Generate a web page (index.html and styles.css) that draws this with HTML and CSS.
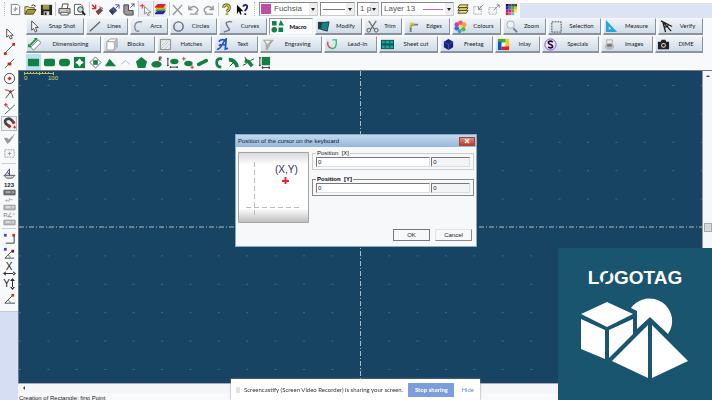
FILE: index.html
```
<!DOCTYPE html>
<html lang="en">
<head>
    <meta charset="UTF-8">
    <meta name="viewport" content="width=device-width, initial-scale=1.0">
    <title>Logotag</title>
    <link rel="stylesheet" href="styles.css">
</head>
<body>
    <header class="toolbar">
        <div class="tools">
            <span class="grip"></span>
            <button class="tool" aria-label="New"><svg viewBox="0 0 14 14"><path d="M2.500 1.500h7l2 2v9h-9z" fill="#fff" stroke="#777"/><path d="M7 4v5M4.500 6.500h5M5 9l4-4" stroke="#999"/></svg></button>
            <button class="tool" aria-label="Open"><svg viewBox="0 0 14 14"><path d="M1 12V4h4l1 1h5v2" fill="#e6df77" stroke="#554"/><path d="M1 12l3-5h9l-3 5z" fill="#a89a28" stroke="#443"/><path d="M8 3q2-2 4 0v1" fill="none" stroke="#222"/></svg></button>
            <button class="tool" aria-label="Save"><svg viewBox="0 0 14 14"><path d="M1 2h12v11H1z" fill="#26281c"/><path d="M3 2h7v5H3z" fill="#9a9c4a"/><path d="M4 9h6v4H4z" fill="#ddd"/><path d="M5 10h2v3H5z" fill="#222"/></svg></button>
            <span class="divider"></span>
            <button class="tool" aria-label="Print"><svg viewBox="0 0 14 14"><path d="M4 6l1-5h6l-1 5" fill="#fff" stroke="#444"/><path d="M1 6h12v5H1z" fill="#ccc" stroke="#444"/><path d="M3 10h8v3H3z" fill="#eee" stroke="#555"/><path d="M9 8h2" stroke="#a90"/></svg></button>
            <button class="tool" aria-label="Preview"><svg viewBox="0 0 14 14"><path d="M1.500 1.500h7l2 2v9h-9z" fill="#fff" stroke="#555"/><circle cx="8" cy="7" r="3" fill="#bfe0e6" stroke="#333"/><path d="M10 9l3 4" stroke="#222" stroke-width="2"/></svg></button>
            <span class="divider"></span>
            <button class="tool" aria-label="Import"><svg viewBox="0 0 14 14"><path d="M1 2l4 4M5 2v4H1" stroke="#d22" fill="none" stroke-width="1.500"/><path d="M5 9l5-4 3 3-5 5z" fill="#555"/><path d="M5 9l3 4 1-3z" fill="#c22"/><path d="M9 4l4 2" stroke="#c22"/></svg></button>
            <button class="tool" aria-label="Export"><svg viewBox="0 0 14 14"><path d="M9 6l4-4M9 2h4v4" stroke="#44b" fill="none"/><path d="M2 8l5-4 4 4-5 5z" fill="#456"/><path d="M2 8l4 5 1-4z" fill="#238"/></svg></button>
            <button class="tool" aria-label="Part"><svg viewBox="0 0 14 14"><path d="M2 2h5v6h5v5H4l-2-2z" fill="#999" stroke="#444"/><path d="M9 5l4-4M10 1h3v3" stroke="#44b" fill="none"/></svg></button>
            <button class="tool tool-pressed" aria-label="Pick"><svg viewBox="0 0 14 14"><path d="M1 3h5M3.500 1v5" stroke="#c22"/><path d="M6 4v8l2-2 2 4 1-1-1-3h3z" fill="#fff" stroke="#888"/></svg></button>
            <button class="tool tool-pressed" aria-label="Layers"><svg viewBox="0 0 14 14"><path d="M1 11l3-3h9l-3 4H1z" fill="#22a"/><path d="M1 9l3-3h9l-3 3z" fill="#2a4"/><path d="M1 7l3-3h9l-3 3z" fill="#ea2"/><path d="M1 4l3-3h9l-3 4H1z" fill="#d22"/></svg></button>
            <span class="divider"></span>
            <button class="tool" aria-label="Delete"><svg viewBox="0 0 14 14"><path d="M2 2l10 11M12 2L2 13" stroke="#999" stroke-width="1.500"/></svg></button>
            <button class="tool" aria-label="Undo"><svg viewBox="0 0 14 14"><path d="M2 3v4h4M2 7q4-5 8-2t-1 6M3 12h9" fill="none" stroke="#999" stroke-width="1.500"/></svg></button>
            <button class="tool" aria-label="Redo"><svg viewBox="0 0 14 14"><path d="M12 3v4H8M12 7Q8 2 4 5t1 6M3 12h9" fill="none" stroke="#999" stroke-width="1.500"/></svg></button>
            <span class="divider"></span>
            <button class="tool" aria-label="Help"><svg viewBox="0 0 14 14"><path d="M4 5q0-3 3-3t3 3-3 4" fill="none" stroke="#332" stroke-width="3"/><path d="M4 5q0-3 3-3t3 3-3 4" fill="none" stroke="#e8da28" stroke-width="1.500"/><path d="M6 11h3v2H6z" fill="#b8a818"/></svg></button>
            <button class="tool" aria-label="Context help"><svg viewBox="0 0 14 14"><path d="M1 2v10l2-3 2 4 1-1-1-3h3z" fill="#111"/><path d="M8 4q0-2 2-2t2 2-2 4v1" fill="none" stroke="#226" stroke-width="2"/><path d="M9 11h2v2H9z" fill="#226"/></svg></button>
        </div>
        <span class="grip"></span>
        <div class="combo combo-colour"><select aria-label="Colour"><option>Fuchsia</option></select></div>
        <div class="combo combo-line"><select aria-label="Line type"><option></option></select></div>
        <div class="combo combo-width"><select aria-label="Line width"><option>1 p</option></select></div>
        <div class="combo combo-layer"><select aria-label="Layer"><option>Layer 13</option></select></div>
        <div class="tools tools-end">
            <button class="tool" aria-label="Layer list"><svg viewBox="0 0 14 14"><path d="M2 11l2-3h9l-2 3zM2 8l2-3h9l-2 3zM2 5l2-3h9l-2 3z" fill="#f4e96a" stroke="#443"/></svg></button>
            <button class="tool" aria-label="Shrink"><svg viewBox="0 0 14 14"><path d="M2 4h8v8H2z" fill="none" stroke="#aaa" stroke-dasharray="2 1"/><path d="M12 2L7 7M7 4v3h3" stroke="#888" fill="none"/></svg></button>
            <button class="tool" aria-label="Extend"><svg viewBox="0 0 14 14"><path d="M1 5h8v7H1z" fill="none" stroke="#aaa" stroke-dasharray="2 1"/><path d="M6 8l6-6M9 2h3v3" stroke="#888" fill="none"/></svg></button>
            <button class="tool" aria-label="Palette"><svg viewBox="0 0 14 14"><path d="M2 1h3v3H2z" fill="#211"/><path d="M5 1h3v3H5z" fill="#43a"/><path d="M8 1h3v3H8z" fill="#262"/><path d="M11 1h3v3h-3z" fill="#832"/><path d="M2 4h3v3H2z" fill="#229"/><path d="M5 4h3v3H5z" fill="#28b"/><path d="M8 4h3v3H8z" fill="#2b4"/><path d="M11 4h3v3h-3z" fill="#bc2"/><path d="M2 7h3v3H2z" fill="#92a"/><path d="M5 7h3v3H5z" fill="#d28"/><path d="M8 7h3v3H8z" fill="#e62"/><path d="M11 7h3v3h-3z" fill="#ee3"/><path d="M2 10h3v3H2z" fill="#d22"/><path d="M5 10h3v3H5z" fill="#f4b"/><path d="M8 10h3v3H8z" fill="#3dd"/></svg></button>
        </div>
        <div class="toolbar-rest"></div>
    </header>

    <div class="workspace">
        <aside class="sidebar">
            <div class="side-tools">
                <button class="side" aria-label="Pointer"><svg viewBox="0 0 14 14"><path d="M4 2v9l2-2 2 4 2-1-2-3h3z" fill="#fff" stroke="#444"/></svg></button>
                <button class="side" aria-label="End point"><svg viewBox="0 0 14 14"><path d="M2 12L12 2" stroke="#555"/><path d="M1 11h3v3H1zM10 1h3v3h-3z" fill="#c22"/></svg></button>
                <button class="side" aria-label="Mid point"><svg viewBox="0 0 14 14"><path d="M2 12L12 2" stroke="#555"/><path d="M5 6h4v3H5z" fill="#c22"/></svg></button>
                <button class="side" aria-label="Centre"><svg viewBox="0 0 14 14"><circle cx="7" cy="7" r="5.500" fill="none" stroke="#444"/><path d="M5 7h4M7 5v4" stroke="#c22" stroke-width="1.500"/></svg></button>
                <button class="side" aria-label="Intersection"><svg viewBox="0 0 14 14"><path d="M2 3q7 0 9 9M12 3Q7 5 3 12" fill="none" stroke="#444"/><circle cx="8" cy="5" r="1.500" fill="#c22"/></svg></button>
                <button class="side" aria-label="Tangent"><svg viewBox="0 0 14 14"><path d="M2 13L13 3M4 4l3 4" stroke="#555"/><path d="M1 3h4M3 1v4" stroke="#c22"/></svg></button>
                <button class="side side-pressed" aria-label="Magnet"><svg viewBox="0 0 14 14"><path d="M8 11L3 7q-2-4 2-5 3-1 7 5" fill="none" stroke="#444" stroke-width="3"/><path d="M8 11L6 9M12 7l-1-2" stroke="#c22" stroke-width="3"/><path d="M11 11h3M12.500 9.500v3" stroke="#c22"/></svg></button>
                <button class="side" aria-label="Validate"><svg viewBox="0 0 14 14"><path d="M1 7l3-1 2 2 7-6-5 8-3 3z" fill="#999"/></svg></button>
                <button class="side" aria-label="Grid"><svg viewBox="0 0 14 14"><path d="M2 3h10v8H2z" fill="none" stroke="#999" stroke-dasharray="2 1"/><path d="M5 7h4M7 5v4" stroke="#999"/></svg></button>
                <hr class="side-rule">
                <button class="side" aria-label="Angle"><svg viewBox="0 0 14 14"><path d="M1 9h12l-3 3H4zM7 9V2L2 9" fill="#ddd" stroke="#555"/><path d="M5 6l3 3" stroke="#33c"/></svg></button>
                <button class="side side-keys" aria-label="Absolute coordinates">123<svg viewBox="0 0 14 7"><path d="M1 1h12v5H1z" fill="#777" stroke="#555"/><path d="M3 3h5M10 3h2" stroke="#ddd"/></svg></button>
                <button class="side side-keys side-off" aria-label="Relative coordinates">+/−<svg viewBox="0 0 14 7"><path d="M1 1h12v5H1z" fill="#bbb" stroke="#999"/><path d="M3 3h5M10 3h2" stroke="#fff"/></svg></button>
                <button class="side side-keys side-off" aria-label="Polar coordinates">R∠°<svg viewBox="0 0 14 7"><path d="M1 1h12v5H1z" fill="#bbb" stroke="#999"/><path d="M3 3h5M10 3h2" stroke="#fff"/></svg></button>
                <hr class="side-rule">
                <button class="side" aria-label="Right angle"><svg viewBox="0 0 14 14"><path d="M3 12h9V4" fill="none" stroke="#333"/><path d="M1 2h3v3H1z" fill="#44c"/><path d="M10 2h3v3h-3z" fill="#c33"/></svg></button>
                <button class="side" aria-label="Free angle"><svg viewBox="0 0 14 14"><path d="M12 12H2l8-8" fill="none" stroke="#444"/><path d="M5 9q3 0 3 3" fill="none" stroke="#4a6"/><path d="M1 1h3v3H1z" fill="#44c"/><path d="M9 3h3v3H9z" fill="#722"/></svg></button>
                <button class="side side-axis" aria-label="Lock X">X<svg viewBox="0 0 14 5"><path d="M0 2.500l3-2.500v5zM14 2.500L11 0v5zM2 2h10v1H2z" fill="#333"/></svg></button>
                <button class="side side-axis side-axis-y" aria-label="Lock Y">Y<svg viewBox="0 0 5 12"><path d="M2.500 0L5 3H0zM2.500 12L5 9H0zM2 2h1v8H2z" fill="#333"/></svg></button>
                <button class="side" aria-label="Lock angle"><svg viewBox="0 0 14 14"><path d="M13 12H2l8-8" fill="none" stroke="#444"/><path d="M5 9q3 0 3 3" fill="none" stroke="#4a6"/><path d="M9 2h3v3H9z" fill="#c33"/></svg></button>
            </div>
        </aside>

        <main class="main">
            <nav class="tabs tabs-first">
                <button class="tab"><svg viewBox="0 0 14 14"><path d="M4 1v10l2-2 2 4 1.500-1L8 8h3z" fill="#fff" stroke="#444"/></svg><span>Snap Shot</span></button>
                <button class="tab"><svg viewBox="0 0 14 14"><path d="M2 12L13 2" stroke="#666" stroke-width="1.500"/></svg><span>Lines</span></button>
                <button class="tab"><svg viewBox="0 0 14 14"><path d="M11 2Q3 1 3 7t5 5" fill="none" stroke="#889" stroke-width="1.500"/></svg><span>Arcs</span></button>
                <button class="tab"><svg viewBox="0 0 14 14"><circle cx="7" cy="7" r="5" fill="none" stroke="#667" stroke-width="1.500"/></svg><span>Circles</span></button>
                <button class="tab"><svg viewBox="0 0 14 14"><path d="M12 2Q4 1 6 5t3 5-6 3" fill="none" stroke="#778" stroke-width="1.500"/></svg><span>Curves</span></button>
                <button class="tab tab-active"><svg viewBox="0 0 14 14"><path d="M1 1h5v5H1zM10.500 0l3.500 6H8zM8 8h5v5H8z" fill="#138043"/><circle cx="3.500" cy="10.500" r="3" fill="#138043"/></svg><span>Macro</span></button>
                <button class="tab"><svg viewBox="0 0 14 14"><path d="M1 2h6v8H1z" fill="#243c48"/><path d="M5 3l8-1-2 10-7-2z" fill="#138587" stroke="#243c48"/></svg><span>Modify</span></button>
                <button class="tab"><svg viewBox="0 0 14 14"><path d="M3 1l6 9M11 1L5 10" stroke="#777" stroke-width="1.500"/><circle cx="3" cy="11" r="2" fill="none" stroke="#555"/><circle cx="11" cy="11" r="2" fill="none" stroke="#555"/></svg><span>Trim</span></button>
                <button class="tab"><svg viewBox="0 0 14 14"><path d="M5 13V7l2-2h6" fill="none" stroke="#777" stroke-width="2"/><path d="M5 8V4h4" fill="none" stroke="#cc3" stroke-width="2"/></svg><span>Edges</span></button>
                <button class="tab"><svg viewBox="0 0 14 14"><circle cx="7" cy="3" r="2.500" fill="#f55"/><circle cx="11" cy="5" r="2.500" fill="#f94"/><circle cx="10" cy="10" r="2.500" fill="#5b4"/><circle cx="6" cy="12" r="2" fill="#2ab"/><circle cx="3" cy="9" r="2.500" fill="#46d"/><circle cx="3" cy="5" r="2.500" fill="#b4a"/><circle cx="7" cy="7" r="2" fill="#fd5"/></svg><span>Colours</span></button>
                <button class="tab"><svg viewBox="0 0 14 14"><circle cx="6" cy="5" r="4" fill="#e7f4fa" stroke="#aab"/><path d="M9 9l4 4" stroke="#779" stroke-width="2"/></svg><span>Zoom</span></button>
                <button class="tab"><svg viewBox="0 0 14 14"><path d="M2 2h10v11H2z" fill="none" stroke="#444" stroke-dasharray="2 1"/></svg><span>Selection</span></button>
                <button class="tab"><svg viewBox="0 0 14 14"><path d="M1 0l12 13H1zM4 7v3h3z" fill="#28a4d8" fill-rule="evenodd"/></svg><span>Measure</span></button>
                <button class="tab"><svg viewBox="0 0 14 14"><path d="M1 1l12 6M3 2l3 11M3 2l9 10M5 8l4-2" fill="none" stroke="#222" stroke-width="1.500"/></svg><span>Verify</span></button>
            </nav>
            <nav class="tabs tabs-second">
                <button class="tab"><svg viewBox="0 0 14 14"><path d="M3 10l8-8 3 3-8 8z" fill="#fff" stroke="#777"/><path d="M2 8l7-7" stroke="#199447" stroke-width="2"/><path d="M0 10V6l4 4zM10 3V0H6z" fill="#199447"/></svg><span>Dimensioning</span></button>
                <button class="tab"><svg viewBox="0 0 14 14"><path d="M2 4l4-3h7v9l-3 3H2z" fill="#fff" stroke="#999"/><path d="M2 4h8v9M10 4l3-3" fill="none" stroke="#999"/><path d="M10 4l3-3v9l-3 3z" fill="#bbb"/></svg><span>Blocks</span></button>
                <button class="tab"><svg viewBox="0 0 14 14"><path d="M1.500 1.500h11v11h-11z" fill="#e8edf0" stroke="#888"/><path d="M2 5l3-3M2 9l7-7M2 12L12 2M6 12l6-6M10 12l2-2" stroke="#999" stroke-dasharray="1 1"/></svg><span>Hatches</span></button>
                <button class="tab"><svg viewBox="0 0 14 14"><path d="M1 12q3 1 8-9l2-2-1 11 3-1M3 8q4-2 8 0M3 4q2-3 6-2" fill="none" stroke="#2454c4" stroke-width="1.800"/></svg><span>Text</span></button>
                <button class="tab"><svg viewBox="0 0 14 14"><path d="M1 2h12L9 7l-3 6H4V7z" fill="#aaa"/><path d="M3 3h6L6 7z" fill="#eee"/></svg><span>Engraving</span></button>
                <button class="tab"><svg viewBox="0 0 14 14"><path d="M2 4q-1 5 3 7" fill="none" stroke="#d44" stroke-width="1.500"/><path d="M5 11q7 2 6-9H7" fill="none" stroke="#3b6" stroke-width="1.500"/></svg><span>Lead-In</span></button>
                <button class="tab"><svg viewBox="0 0 14 14"><path d="M0 2h14v10H0z" fill="#155"/><path d="M1 3h3v3H1zM5 3h4v3H5zM10 3h3v3h-3zM1 8h3v3H1zM5 8h4v3H5zM10 8h3v3h-3z" fill="#17a79f"/></svg><span>Sheet cut</span></button>
                <button class="tab"><svg viewBox="0 0 14 14"><path d="M7 1l5 3v6l-5 3-5-3V4z" fill="#1a237c"/><path d="M2 4l5 3 5-3M7 7v6" fill="none" stroke="#4350b0"/></svg><span>Freetag</span></button>
                <button class="tab"><svg viewBox="0 0 14 14"><path d="M1 1h9v4H1z" fill="#4a3"/><path d="M9 1h4v9H9z" fill="#ec2"/><path d="M5 9h8v4H5z" fill="#d22"/><path d="M1 4h4v9H1z" fill="#15b"/><path d="M5 5h4v4H5z" fill="#fff"/></svg><span>Inlay</span></button>
                <button class="tab"><svg viewBox="0 0 14 14"><circle cx="7" cy="7" r="6" fill="#eae4fa" stroke="#75b"/><path d="M9.500 4.500Q7 2.500 5 4q-1 2 2 3t2 3q-2 1.500-4.500-.5" fill="none" stroke="#213" stroke-width="1.800"/></svg><span>Specials</span></button>
                <button class="tab"><svg viewBox="0 0 14 14"><path d="M4 2h6v4H4z" fill="#eee" stroke="#aaa"/><ellipse cx="7" cy="9" rx="5" ry="4" fill="#bbb"/><ellipse cx="7" cy="8" rx="3" ry="1.500" fill="#777"/></svg><span>Images</span></button>
                <button class="tab"><svg viewBox="0 0 14 14"><path d="M1 4h3l1-2h4l1 2h3v8H1z" fill="#222"/><circle cx="7" cy="8" r="2.500" fill="#ddd"/><circle cx="7" cy="8" r="1.500" fill="#222"/></svg><span>DIME</span></button>
            </nav>
            <div class="shapes">
                <button class="shape shape-pressed" aria-label="Rectangle"><svg viewBox="0 0 14 14"><path d="M1 3h12v8H1z"/></svg></button>
                <button class="shape" aria-label="Rounded rectangle"><svg viewBox="0 0 14 14"><rect x="1" y="3" width="12" height="8" rx="2"/></svg></button>
                <button class="shape" aria-label="Oblong"><svg viewBox="0 0 14 14"><rect x="1" y="3" width="12" height="8" rx="4"/></svg></button>
                <button class="shape" aria-label="Inverted corners"><svg viewBox="0 0 14 14"><path d="M1 1h12v12H1z"/><path d="M7 3l1.500 2.500L11 7 8.500 8.500 7 11 5.500 8.500 3 7l2.500-1.500z" fill="#fff" stroke="#fff"/></svg></button>
                <button class="shape" aria-label="Frame"><svg viewBox="0 0 14 14"><path d="M7 1l6 6-6 6-6-6z" fill="none" stroke="#666"/><path d="M4.500 4.500h5v5h-5z"/></svg></button>
                <button class="shape" aria-label="Triangle"><svg viewBox="0 0 14 14"><path d="M6 3l7 8H1z"/></svg></button>
                <button class="shape" aria-label="Chevron"><svg viewBox="0 0 14 14"><path d="M2 9l5-4 5 4" fill="none" stroke="#bbb"/></svg></button>
                <button class="shape" aria-label="Polygon"><svg viewBox="0 0 14 14"><path d="M7 1l6 5-2 7H3L1 6z"/></svg></button>
                <button class="shape" aria-label="Ellipse by radius"><svg viewBox="0 0 14 14"><ellipse cx="7" cy="9" rx="5.500" ry="3.500"/><path d="M6 9l4-4" stroke="#a33"/><path d="M10 5V1h2v2h-2l2 2" fill="none" stroke="#444"/></svg></button>
                <button class="shape" aria-label="Ellipse by size"><svg viewBox="0 0 14 14"><ellipse cx="9" cy="6" rx="4.500" ry="3"/><path d="M2 2v9M1 3h2M1 10h2M4 12h9M5 11v2M12 11v2" stroke="#333"/></svg></button>
                <button class="shape" aria-label="Ellipse by points"><svg viewBox="0 0 14 14"><ellipse cx="8" cy="8" rx="4.500" ry="3"/><path d="M1 3h4M3 1v4M10 12h4M12 10v4" stroke="#c33"/></svg></button>
                <button class="shape" aria-label="Slot"><svg viewBox="0 0 14 14"><path d="M3 9l8-4" stroke="#138043" stroke-width="4" stroke-linecap="round"/></svg></button>
                <button class="shape" aria-label="Crescent"><svg viewBox="0 0 14 14"><path d="M11 3Q5 2 5 7t5 5" fill="none" stroke="#138043" stroke-width="3"/></svg></button>
                <button class="shape" aria-label="Curved slot"><svg viewBox="0 0 14 14"><path d="M2 4q7 0 9 8" fill="none" stroke="#138043" stroke-width="4"/><path d="M3 11l4-4" stroke="#333"/></svg></button>
                <button class="shape" aria-label="Curved slot by points"><svg viewBox="0 0 14 14"><path d="M3 5l4 1 4 5" fill="none" stroke="#138043" stroke-width="4"/><path d="M3 1l2 3M1 10l4-2M9 5l4-2" stroke="#333"/></svg></button>
                <button class="shape" aria-label="Block by size"><svg viewBox="0 0 14 14"><path d="M4 1h9v9H4z"/><path d="M2 1v10M1 2h2M1 10h2M4 12.500h9M5 11v3M12 11v3" stroke="#333"/></svg></button>
            </div>

            <div class="view">
                <section class="canvas">
                    <svg class="grid-lines">
                        <defs>
                            <pattern id="dots" x="0" y="14" width="28.400" height="28.400" patternUnits="userSpaceOnUse">
                                <path d="M0 0h2v1H0z" fill="#426a84"/>
                            </pattern>
                        </defs>
                        <rect width="100%" height="100%" fill="url(#dots)"/>
                        <line x1="0" y1="50%" x2="100%" y2="50%"/>
                        <line x1="50%" y1="0" x2="50%" y2="100%"/>
                    </svg>
                    <div class="ruler">
                        <svg viewBox="0 0 30 4"><path d="M0 2.500h30M.5 1v3M3.500 1v2M6.500 1v2M9.500 1v2M12.500 1v2M15.500 1v3M18.500 1v2M21.500 1v2M24.500 1v2M29.500 1v3" stroke="#b9bd55"/></svg>
                        <div class="ruler-marks"><span>0</span><span>100</span></div>
                    </div>

                    <form class="dialog">
                        <div class="dialog-title">
                            <span>Position of the cursor on the keyboard</span>
                            <button type="button" class="close" aria-label="Close"><svg viewBox="0 0 6 6"><path d="M1 1l4 4M5 1L1 5" stroke="#fff" stroke-width="1.500"/></svg></button>
                        </div>
                        <div class="dialog-body">
                            <svg class="preview" viewBox="0 0 71 71">
                                <defs>
                                    <linearGradient id="sheet" x1="0" y1="0" x2="0" y2="1">
                                        <stop offset="0" stop-color="#d8d8d8"/>
                                        <stop offset=".18" stop-color="#fff"/>
                                        <stop offset=".8" stop-color="#fff"/>
                                        <stop offset="1" stop-color="#bdbdbd"/>
                                    </linearGradient>
                                </defs>
                                <path d="M.5.5h70v70H.5z" fill="url(#sheet)" stroke="#a5a5a5"/>
                                <path d="M16.500 10v54M8 55.500h54" stroke="#bbb" stroke-dasharray="5 3"/>
                                <path d="M44 29h7M47.500 25v7" stroke="#e23" stroke-width="2"/>
                                <text x="37" y="21">(X,Y)</text>
                            </svg>
                            <div class="fields">
                                <fieldset>
                                    <legend>Position&nbsp; [X]</legend>
                                    <input class="value" type="text" value="0" aria-label="Position X">
                                    <input class="result" type="text" value="0" aria-label="Result X" readonly>
                                </fieldset>
                                <fieldset class="current">
                                    <legend>Position&nbsp; [Y]</legend>
                                    <input class="value" type="text" value="0" aria-label="Position Y">
                                    <input class="result" type="text" value="0" aria-label="Result Y" readonly>
                                </fieldset>
                            </div>
                        </div>
                        <div class="dialog-buttons">
                            <button type="button" class="ok">OK</button>
                            <button type="button">Cancel</button>
                        </div>
                    </form>
                </section>
                <div class="scroll-y"><span class="arrow-up"></span><span class="thumb"></span></div>
            </div>
            <div class="scroll-x"><span class="arrow-left"></span></div>
            <footer class="status">Creation of Rectangle: first Point</footer>
        </main>
    </div>

    <div class="share">
        <span class="share-grip"></span>
        <span class="share-text">Screencastify (Screen Video Recorder) is sharing your screen.</span>
        <button class="stop">Stop sharing</button>
        <a href="#">Hide</a>
    </div>

    <div class="brand">
        <div class="brand-name">L<span class="cut">O</span>GOTAG</div>
        <svg class="brand-mark" viewBox="0 0 108 82">
            <path d="M50 11A22.500 22.500 0 1 1 87 37L69 20 56 32V14z" fill="#fff"/>
            <path d="M0 17L26 5l26 12-26 13zM0 22l24 11v29L0 52zM52 22v15L28 61V33zM67 28v53L31 64zM71 28l36 36-36 17z" fill="#fff"/>
        </svg>
    </div>
</body>
</html>
```
FILE: styles.css
```
*{
    box-sizing: border-box;
}
body{
    margin: 0;
    height: 100vh;
    display: flex;
    flex-direction: column;
    overflow: hidden;
    background-color: #f8f9fb;
    color: #222;
    font-family: "Liberation Sans", Arial, sans-serif;
    font-size: 6px;
    line-height: 8px;
}
button, input, select{
    font: inherit;
    color: inherit;
    margin: 0;
    padding: 0;
}
svg{
    display: block;
}

/* top toolbar */
.toolbar{
    display: flex;
    align-items: center;
    flex: none;
    height: 18px;
    gap: 2px;
}
.tools{
    display: flex;
    align-items: center;
    flex: none;
    width: 248px;
    margin-left: 2px;
    justify-content: space-between;
}
.tools-end{
    width: 62px;
    margin-left: 0;
}
.grip{
    width: 3px;
    height: 14px;
    margin-left: 2px;
    border-left: 1px dotted #bbb;
}
.tool{
    width: 14px;
    height: 16px;
    border: none;
    background: none;
}
.tool svg{
    width: 13px;
    height: 13px;
}
.tool-pressed{
    background-color: #eceef4;
    border-left: 1px solid #ccc;
}
.divider{
    width: 1px;
    height: 14px;
    background-color: #ccc;
}
.combo{
    position: relative;
    flex: none;
    height: 14px;
    border: 1px solid #888;
    border-right-color: #ccc;
    border-bottom-color: #ccc;
    background-color: #fff;
}
.combo::after{
    content: "";
    position: absolute;
    right: 2px;
    top: 5px;
    border: 2px solid transparent;
    border-top: 3px solid #222;
    pointer-events: none;
}
.combo select{
    appearance: none;
    display: block;
    width: 100%;
    height: 12px;
    padding-left: 2px;
    border: none;
    border-radius: 0;
    background: linear-gradient(#eee, #eee) right / 8px 100% no-repeat;
    color: #555;
    font-size: 8px;
    line-height: 12px;
}
.combo-colour{
    width: 59px;
}
.combo-colour select{
    padding-left: 14px;
    background: linear-gradient(#bd4ea5, #bd4ea5) 1px 1px / 10px 10px no-repeat, linear-gradient(#eee, #eee) right / 8px 100% no-repeat;
}
.combo-line{
    width: 35px;
}
.combo-line select{
    background: linear-gradient(#777, #777) 2px 6px / 22px 1px no-repeat, linear-gradient(#eee, #eee) right / 8px 100% no-repeat;
}
.combo-width{
    width: 22px;
}
.combo-layer{
    width: 73px;
}
.combo-layer select{
    background: linear-gradient(#c468b4, #c468b4) 41px 6px / 20px 1px no-repeat, linear-gradient(#eee, #eee) right / 8px 100% no-repeat;
}
.toolbar-rest{
    flex: 1;
    align-self: stretch;
    border-top: 3px solid #fff;
    background-color: #dbe3f4;
}

/* left toolbar */
.workspace{
    flex: 1;
    min-height: 0;
    display: flex;
}
.sidebar{
    width: 18px;
    flex: none;
    background-color: #d5def2;
}
.side-tools{
    display: flex;
    flex-direction: column;
    align-items: center;
    padding: 8px 0 5px;
    background-color: #f8f9fb;
    border-bottom: 1px solid #c4c8d0;
}
.side{
    display: flex;
    flex-direction: column;
    align-items: center;
    justify-content: center;
    width: 16px;
    height: 15px;
    border: none;
    background: none;
}
.side svg{
    width: 13px;
    height: 13px;
}
.side-pressed{
    border: 1px solid #bbb;
    background-color: #eef0f4;
}
.side-keys{
    font-weight: bold;
    line-height: 7px;
}
.side-keys svg{
    height: 7px;
}
.side-off{
    color: #999;
}
.side-axis{
    font-size: 10px;
    line-height: 9px;
}
.side-axis svg{
    height: 5px;
}
.side-axis-y{
    flex-direction: row;
}
.side-axis-y svg{
    width: 5px;
    height: 12px;
}
.side-rule{
    width: 14px;
    height: 1px;
    margin: 2px 0;
    border: none;
    background-color: #ccc;
}

/* tab buttons */
.main{
    flex: 1;
    min-width: 0;
    display: flex;
    flex-direction: column;
}
.tabs{
    display: grid;
    flex: none;
    gap: 2px;
    height: 17px;
    margin: 0 9px 1px 8px;
    font-family: Lato, "Liberation Sans", sans-serif;
}
.tabs-first{
    grid-template-columns: 58fr 42fr 38fr 47fr 48fr 44fr 47fr 38fr 46fr 49fr 43fr 53fr 53fr 45fr;
}
.tabs-second{
    grid-template-columns: 75fr 52fr 55fr 44fr 62fr 54fr 59fr 53fr 45fr 57fr 52fr 48fr;
}
.tab{
    display: flex;
    align-items: center;
    min-width: 0;
    padding-left: 1px;
    border: 1px solid #f4f7fa;
    border-right-color: #8b929c;
    border-bottom: 2px solid #8b929c;
    background: linear-gradient(#eef3f7, #cfdce9);
}
.tab svg{
    width: 13px;
    height: 13px;
    flex: none;
}
.tab span{
    flex: 1;
    text-align: center;
    white-space: nowrap;
}
.tab-active{
    border-color: #999 #eee #eee #999;
    border-bottom-width: 1px;
    background: #fbfcfd;
    font-weight: bold;
    color: #000;
}
.shapes{
    display: grid;
    grid-template-columns: repeat(16, 1fr);
    flex: none;
    width: 246px;
    height: 16px;
    margin-left: 8px;
}
.shape{
    display: flex;
    align-items: center;
    justify-content: center;
    border: none;
    background: none;
}
.shape svg{
    width: 13px;
    height: 13px;
    fill: #138043;
}
.shape-pressed{
    background-color: #b9e2ec;
}

/* drawing area */
.view{
    flex: 1;
    min-height: 0;
    display: flex;
    border-top: 1px solid #778;
    border-left: 1px solid #778;
}
.canvas{
    position: relative;
    flex: 1;
    background-color: #184463;
}
.grid-lines{
    position: absolute;
    width: 100%;
    height: 100%;
}
.grid-lines line{
    stroke: #a9bcc8;
    stroke-dasharray: 5 2 1 2;
}
.ruler{
    position: absolute;
    left: 5px;
    top: 0;
    width: 34px;
    color: #d9d860;
}
.ruler svg{
    width: 30px;
    height: 4px;
}
.ruler-marks{
    display: flex;
    justify-content: space-between;
    line-height: 6px;
}
.scroll-y{
    display: flex;
    flex-direction: column;
    align-items: center;
    width: 10px;
    border-left: 1px solid #99a;
    background-color: #f6f7f9;
}
.arrow-up{
    height: 4px;
    margin: 2px 0 -6px;
    border: 2px solid transparent;
    border-bottom-color: #444;
}
.thumb{
    width: 8px;
    height: 9px;
    margin: auto 0;
    border: 1px solid #aaa;
    background-color: #d5d7da;
}
.scroll-x{
    flex: none;
    height: 10px;
    padding: 2px 3px;
    border-top: 1px solid #aab;
    background-color: #f3f5f7;
}
.arrow-left{
    display: block;
    width: 4px;
    border: 2px solid transparent;
    border-right-color: #444;
}
.status{
    flex: none;
    height: 7px;
    padding-left: 1px;
    line-height: 10px;
    overflow: hidden;
}

/* dialog */
.dialog{
    position: absolute;
    left: 216px;
    top: 63px;
    width: 242px;
    padding: 0 2px 5px;
    border: 1px solid #88a9c8;
    background-color: #f7f8fa;
}
.dialog-title{
    display: flex;
    align-items: center;
    justify-content: space-between;
    height: 12px;
    margin: 0 -2px;
    padding: 0 1px 0 2px;
    background: linear-gradient(#c4d9ec, #94b7dc);
    color: #123;
}
.close{
    display: flex;
    align-items: center;
    justify-content: center;
    width: 16px;
    height: 9px;
    border: 1px solid #9c4a40;
    background: linear-gradient(#e08a78, #c23d28);
}
.close svg{
    width: 6px;
    height: 6px;
}
.dialog-body{
    display: flex;
    gap: 3px;
    padding-top: 2px;
}
.preview{
    width: 71px;
    height: 71px;
    margin-top: 3px;
    flex: none;
}
.preview text{
    font-size: 10px;
    fill: #2b2870;
}
.fields{
    flex: 1;
    min-width: 0;
    display: flex;
    flex-direction: column;
    gap: 5px;
}
fieldset{
    display: flex;
    gap: 1px;
    min-width: 0;
    margin: 0;
    padding: 0 3px 2px;
    border: 1px solid #ccc;
}
legend{
    padding: 0 1px;
    line-height: 8px;
}
.current{
    border-color: #888;
}
.current legend{
    font-weight: bold;
    color: #000;
}
fieldset input{
    height: 10px;
    min-width: 0;
    padding: 0 1px;
    border: 1px solid #ddd;
    border-top-color: #777;
    border-left-color: #777;
}
.value{
    flex: 117 1 0;
    width: 0;
    background-color: #fff;
}
.result{
    flex: 37 1 0;
    width: 0;
    background-color: #f3f4f6;
}
.dialog-buttons{
    display: flex;
    justify-content: flex-end;
    gap: 5px;
    padding: 6px 2px 0 0;
}
.dialog-buttons button{
    width: 37px;
    height: 12px;
    border: 1px solid #e4e4e4;
    border-right-color: #888;
    border-bottom-color: #888;
    background-color: #f7f8fa;
}
.dialog-buttons .ok{
    border-color: #777;
}

/* screen sharing notice */
.share{
    position: fixed;
    left: 231px;
    bottom: 0;
    display: flex;
    align-items: center;
    width: 249px;
    height: 21px;
    padding: 0 6px 0 5px;
    background-color: #fff;
    color: #333;
    box-shadow: 0 0 2px #889;
    font-family: Lato, "Liberation Sans", sans-serif;
}
.share-grip{
    width: 4px;
    height: 6px;
    background-color: #e4e4e4;
}
.share-text{
    flex: 1;
    margin-left: 4px;
    white-space: nowrap;
}
.stop{
    width: 46px;
    height: 14px;
    margin-right: 7px;
    border: none;
    background-color: #7a9edb;
    color: #fff;
    font-weight: bold;
}
.share a{
    color: #6d8fd0;
    text-decoration: none;
}

/* logo */
.brand{
    position: fixed;
    right: 0;
    bottom: 0;
    display: flex;
    flex-direction: column;
    align-items: center;
    width: 154px;
    height: 152px;
    padding-top: 19px;
    background-color: #19556f;
    color: #fff;
}
.brand-name{
    font-size: 19px;
    font-weight: bold;
    line-height: 22px;
}
.cut{
    position: relative;
}
.cut::after{
    content: "";
    position: absolute;
    left: 6px;
    top: 1px;
    width: 3px;
    height: 20px;
    background-color: #19556f;
    transform: rotate(30deg);
}
.brand-mark{
    width: 108px;
    height: 82px;
    margin-top: 8px;
}
```
